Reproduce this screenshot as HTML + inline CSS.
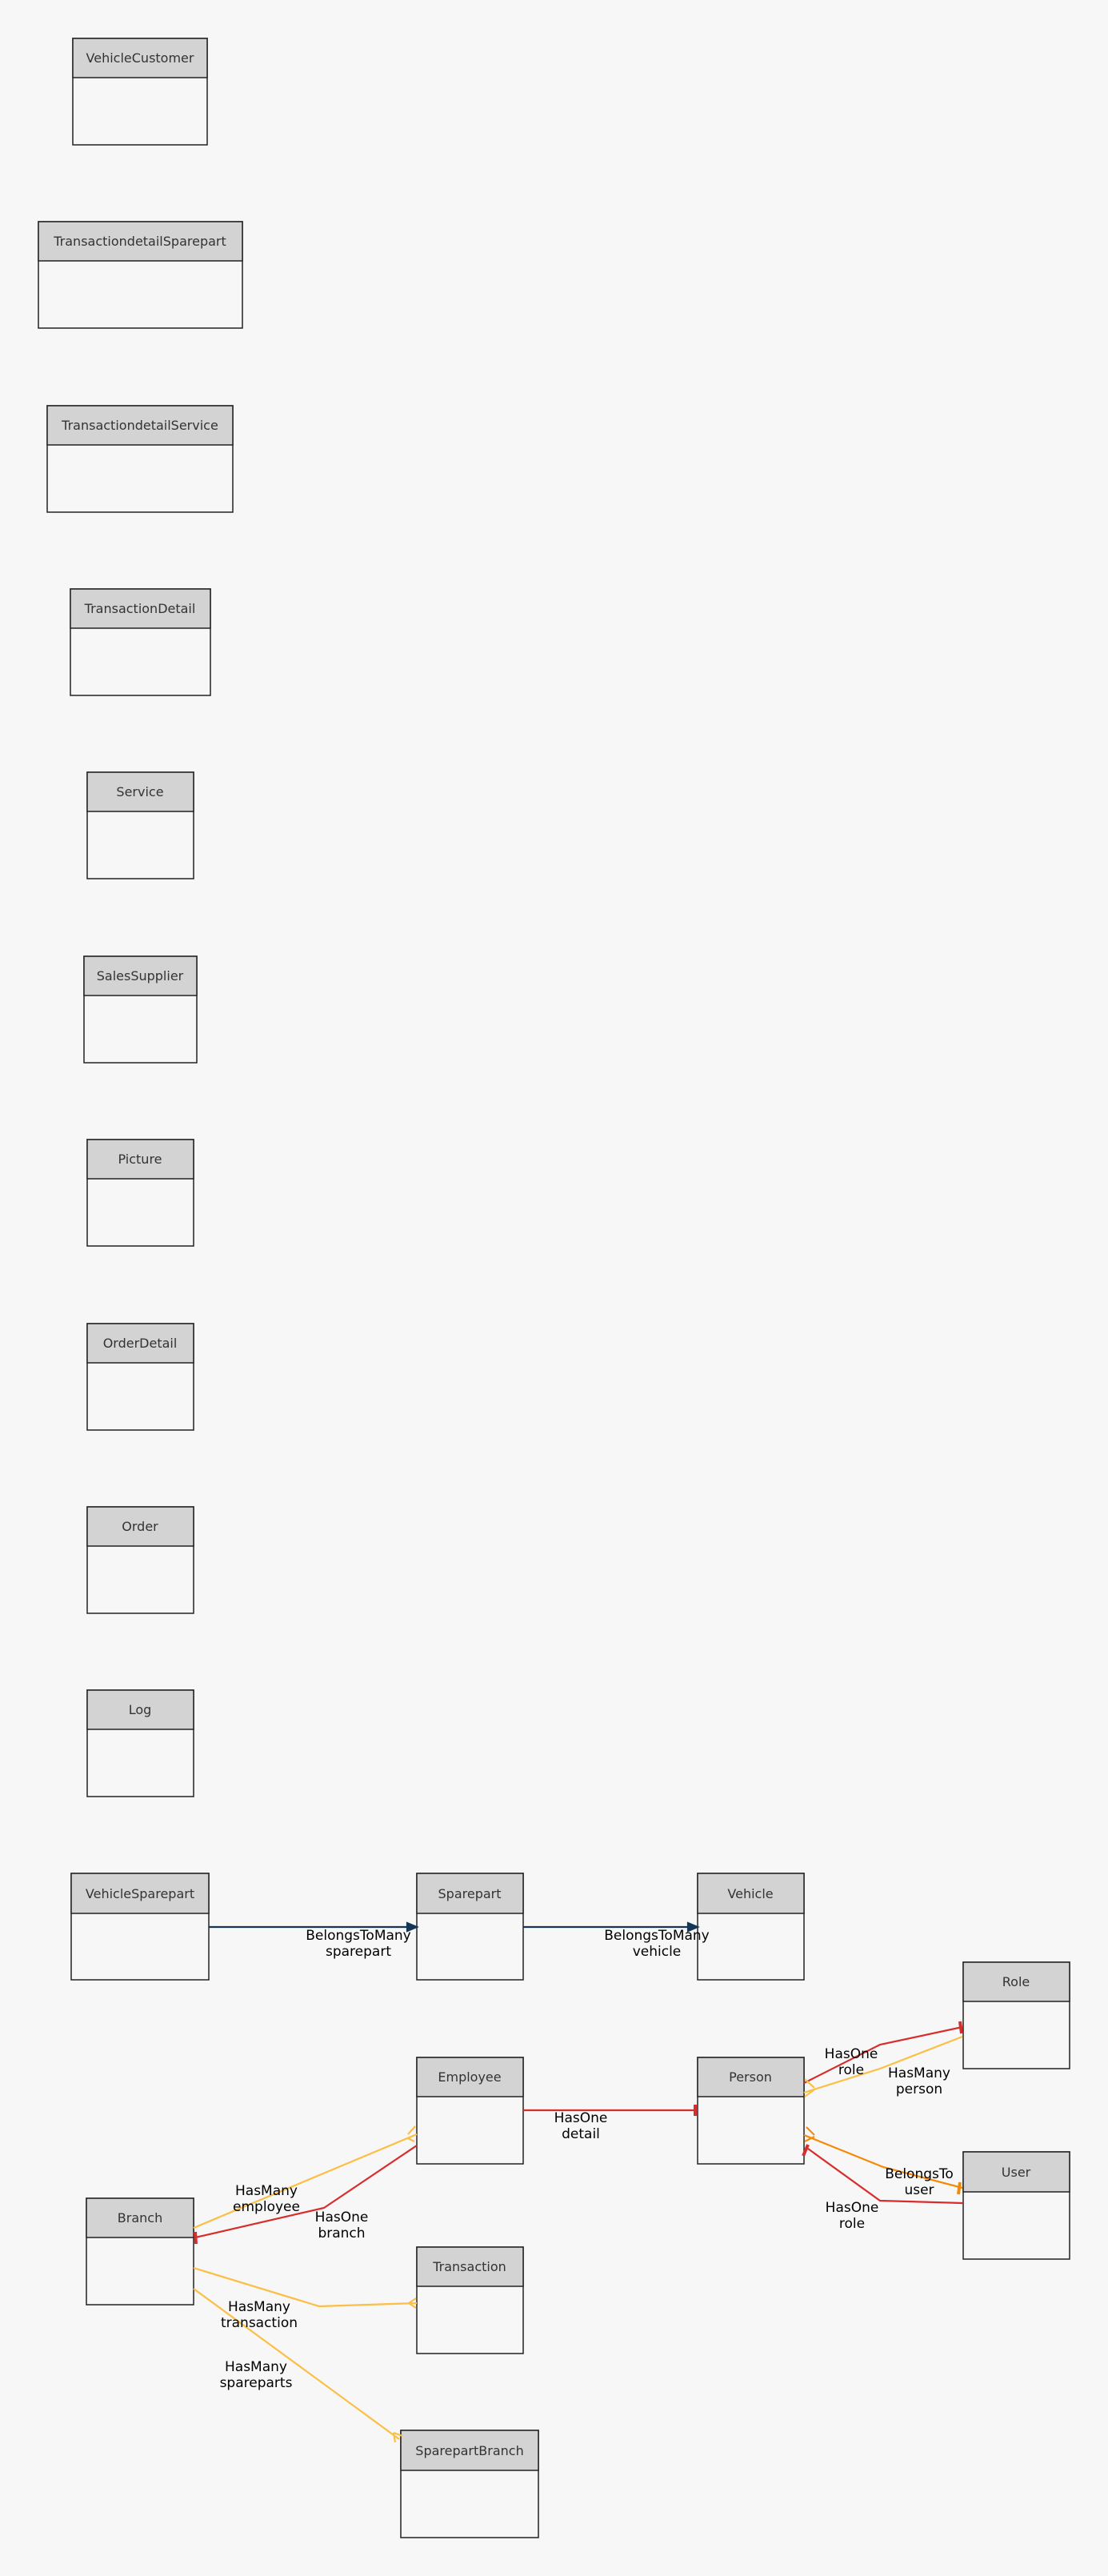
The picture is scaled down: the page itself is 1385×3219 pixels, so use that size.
<!DOCTYPE html>
<html><head><meta charset="utf-8"><style>
html,body{margin:0;padding:0;background:#f7f7f7;}
svg{display:block;}
.t{font-family:"DejaVu Sans","Liberation Sans",sans-serif;font-size:16px;fill:#333;text-anchor:middle;}
.l{font-family:"DejaVu Sans","Liberation Sans",sans-serif;font-size:17px;fill:#000;text-anchor:middle;}
.h{fill:#d3d3d3;stroke:#222;stroke-width:1.5;}
.b{fill:#f7f7f7;stroke:#222;stroke-width:1.5;}
</style></head><body>
<svg width="1385" height="3219" viewBox="0 0 1385 3219" xmlns="http://www.w3.org/2000/svg">
<rect width="1385" height="3219" fill="#f7f7f7"/>
<g>
<rect class="b" x="91" y="48" width="168" height="133"/><rect class="h" x="91" y="48" width="168" height="49"/><text class="t" x="175" y="78">VehicleCustomer</text>
<rect class="b" x="48" y="277" width="255" height="133"/><rect class="h" x="48" y="277" width="255" height="49"/><text class="t" x="175" y="307">TransactiondetailSparepart</text>
<rect class="b" x="59" y="507" width="232" height="133"/><rect class="h" x="59" y="507" width="232" height="49"/><text class="t" x="175" y="537">TransactiondetailService</text>
<rect class="b" x="88" y="736" width="175" height="133"/><rect class="h" x="88" y="736" width="175" height="49"/><text class="t" x="175" y="766">TransactionDetail</text>
<rect class="b" x="109" y="965" width="133" height="133"/><rect class="h" x="109" y="965" width="133" height="49"/><text class="t" x="175" y="995">Service</text>
<rect class="b" x="105" y="1195" width="141" height="133"/><rect class="h" x="105" y="1195" width="141" height="49"/><text class="t" x="175" y="1225">SalesSupplier</text>
<rect class="b" x="109" y="1424" width="133" height="133"/><rect class="h" x="109" y="1424" width="133" height="49"/><text class="t" x="175" y="1454">Picture</text>
<rect class="b" x="109" y="1654" width="133" height="133"/><rect class="h" x="109" y="1654" width="133" height="49"/><text class="t" x="175" y="1684">OrderDetail</text>
<rect class="b" x="109" y="1883" width="133" height="133"/><rect class="h" x="109" y="1883" width="133" height="49"/><text class="t" x="175" y="1913">Order</text>
<rect class="b" x="109" y="2112" width="133" height="133"/><rect class="h" x="109" y="2112" width="133" height="49"/><text class="t" x="175" y="2142">Log</text>
<rect class="b" x="89" y="2341" width="172" height="133"/><rect class="h" x="89" y="2341" width="172" height="50"/><text class="t" x="175" y="2372">VehicleSparepart</text>
<rect class="b" x="521" y="2341" width="133" height="133"/><rect class="h" x="521" y="2341" width="133" height="50"/><text class="t" x="587" y="2372">Sparepart</text>
<rect class="b" x="872" y="2341" width="133" height="133"/><rect class="h" x="872" y="2341" width="133" height="50"/><text class="t" x="938" y="2372">Vehicle</text>
<rect class="b" x="1204" y="2452" width="133" height="133"/><rect class="h" x="1204" y="2452" width="133" height="49"/><text class="t" x="1270" y="2482">Role</text>
<rect class="b" x="521" y="2571" width="133" height="133"/><rect class="h" x="521" y="2571" width="133" height="49"/><text class="t" x="587" y="2601">Employee</text>
<rect class="b" x="872" y="2571" width="133" height="133"/><rect class="h" x="872" y="2571" width="133" height="49"/><text class="t" x="938" y="2601">Person</text>
<rect class="b" x="1204" y="2689" width="133" height="134"/><rect class="h" x="1204" y="2689" width="133" height="50"/><text class="t" x="1270" y="2720">User</text>
<rect class="b" x="108" y="2747" width="134" height="133"/><rect class="h" x="108" y="2747" width="134" height="49"/><text class="t" x="175" y="2777">Branch</text>
<rect class="b" x="521" y="2808" width="133" height="133"/><rect class="h" x="521" y="2808" width="133" height="49"/><text class="t" x="587" y="2838">Transaction</text>
<rect class="b" x="501" y="3037" width="172" height="134"/><rect class="h" x="501" y="3037" width="172" height="50"/><text class="t" x="587" y="3068">SparepartBranch</text>
</g>
<g fill="none" stroke-width="2.2">
<path d="M261 2408 H512" stroke="#163656"/><path d="M509 2403 L521 2408 L509 2413 Z" fill="#163656" stroke="#163656"/>
<path d="M654 2408 H863" stroke="#163656"/><path d="M860 2403 L872 2408 L860 2413 Z" fill="#163656" stroke="#163656"/>
<path d="M654 2637 H872" stroke="#d62d2d"/><path d="M869 2630 V2644" stroke="#d62d2d" stroke-width="4"/>
<path d="M1005 2603 L1100 2555 L1203 2533" stroke="#d62d2d"/><path d="M1200 2526 L1202 2541" stroke="#d62d2d" stroke-width="4"/>
<path d="M1203 2545 L1100 2585 L1005 2615" stroke="#fbbf45"/><path d="M1018 2609 L1006 2598 M1018 2611 L1006 2620" stroke="#fbbf45"/>
<path d="M1005 2668 L1104 2708 L1203 2734" stroke="#f58a07"/><path d="M1018 2668 L1008 2658 M1018 2670 L1006 2676" stroke="#f58a07"/><path d="M1200 2727 L1198 2742" stroke="#f58a07" stroke-width="4"/>
<path d="M1203 2753 L1100 2750 L1010 2685" stroke="#d62d2d"/><path d="M1010 2680 L1004 2694" stroke="#d62d2d" stroke-width="4"/>
<path d="M242 2784 L521 2667" stroke="#fbbf45"/><path d="M510 2667 L519 2657 M510 2672 L518 2676" stroke="#fbbf45"/>
<path d="M521 2681 L405 2759 L244 2796" stroke="#d62d2d"/><path d="M244 2789 L245 2804" stroke="#d62d2d" stroke-width="4"/>
<path d="M242 2834 L399 2882 L521 2878" stroke="#fbbf45"/><path d="M511 2878 L520 2872 M511 2878 L520 2884" stroke="#fbbf45"/>
<path d="M242 2860 L499 3048" stroke="#fbbf45"/><path d="M492 3040 L494 3052 M492 3040 L503 3044" stroke="#fbbf45"/>
</g>
<g>
<text class="l" x="448" y="2424">BelongsToMany</text><text class="l" x="448" y="2444">sparepart</text>
<text class="l" x="821" y="2424">BelongsToMany</text><text class="l" x="821" y="2444">vehicle</text>
<text class="l" x="726" y="2652">HasOne</text><text class="l" x="726" y="2672">detail</text>
<text class="l" x="1064" y="2572">HasOne</text><text class="l" x="1064" y="2592">role</text>
<text class="l" x="1149" y="2596">HasMany</text><text class="l" x="1149" y="2616">person</text>
<text class="l" x="1149" y="2722">BelongsTo</text><text class="l" x="1149" y="2742">user</text>
<text class="l" x="1065" y="2764">HasOne</text><text class="l" x="1065" y="2784">role</text>
<text class="l" x="333" y="2743">HasMany</text><text class="l" x="333" y="2763">employee</text>
<text class="l" x="427" y="2776">HasOne</text><text class="l" x="427" y="2796">branch</text>
<text class="l" x="324" y="2888">HasMany</text><text class="l" x="324" y="2908">transaction</text>
<text class="l" x="320" y="2963">HasMany</text><text class="l" x="320" y="2983">spareparts</text>
</g>
</svg>
</body></html>
